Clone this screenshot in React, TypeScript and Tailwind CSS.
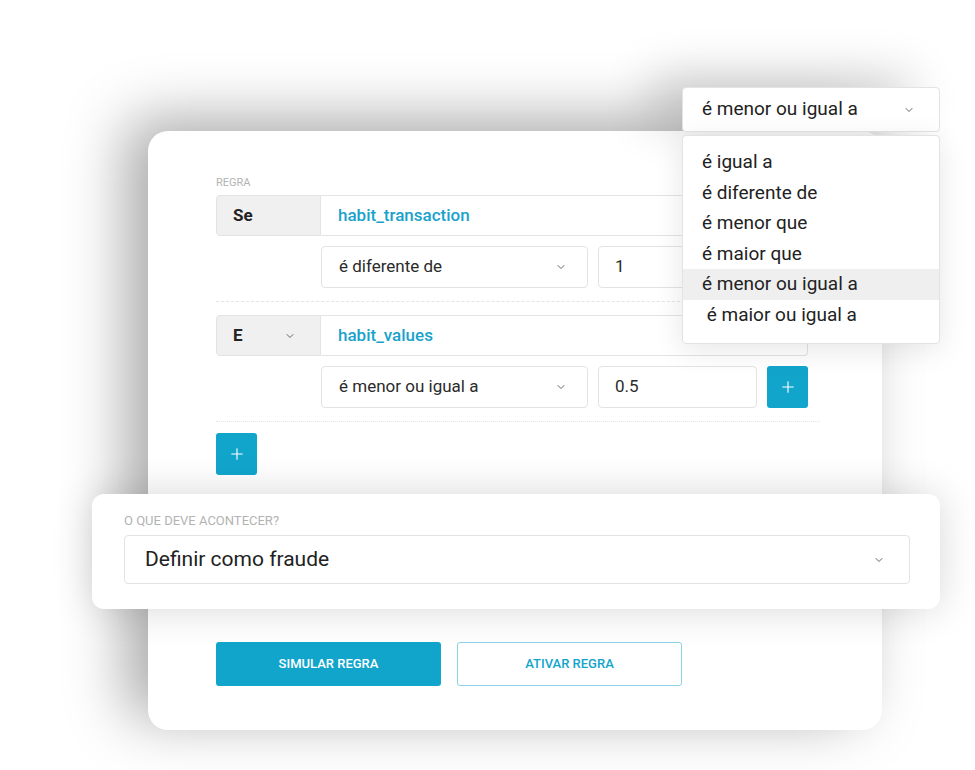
import React from "react"
import { ChevronDown, Plus } from "lucide-react"

const options = [
    "é igual a",
    "é diferente de",
    "é menor que",
    "é maior que",
    "é menor ou igual a",
    " é maior ou igual a",
]

const Chevron = () => (
    <ChevronDown size={12} strokeWidth={1.8} className="text-[#555]" />
)

const Select = ({ label }: { label: string }) => (
    <div className="w-[267px] h-full flex items-center justify-between pl-[17px] pr-[20px] bg-white border border-[#e3e3e3] rounded-[4px] text-[17px] text-[#2b2b2b]">
        <span>{label}</span>
        <Chevron />
    </div>
)

const ValueInput = ({ value }: { value: string }) => (
    <div className="w-[159px] h-full flex items-center pl-[16px] bg-white border border-[#e3e3e3] rounded-[4px] text-[17px] text-[#2b2b2b]">
        {value}
    </div>
)

const PlusButton = () => (
    <div className="w-[41px] h-[42px] flex items-center justify-center bg-[#12a5cc] rounded-[3px] text-white">
        <Plus size={18} strokeWidth={1.5} />
    </div>
)

const App = () => {
    return (
        <div className="relative w-[975px] h-[770px] overflow-hidden bg-white pt-[131px] pl-[148px] font-['Roboto',sans-serif]">
            <div className="relative w-[734px] rounded-[20px] bg-white pt-[46px] pb-[44px] pl-[68px] shadow-[-22px_-12px_60px_rgba(0,0,0,0.34)]">
                <p className="text-[11px] leading-none text-[#b3b3b3] mb-[7px]">REGRA</p>

                {/* first condition */}
                <div className="flex w-[592px] h-[41px]">
                    <div className="w-[105px] flex items-center pl-[16px] bg-[#f0f0f0] border border-[#e3e3e3] rounded-l-[4px] font-bold text-[17px] text-[#222]">
                        Se
                    </div>
                    <div className="flex-1 flex items-center pl-[17px] border border-l-0 border-[#e3e3e3] rounded-r-[4px] font-medium text-[17px] text-[#1aa2cb]">
                        habit_transaction
                    </div>
                </div>
                <div className="flex gap-[10px] h-[42px] mt-[10px] ml-[105px]">
                    <Select label="é diferente de" />
                    <ValueInput value="1" />
                </div>

                <div className="w-[604px] mt-[13px] mb-[13px] border-t border-dashed border-[#e4e4e4]" />

                {/* second condition */}
                <div className="flex w-[592px] h-[41px]">
                    <div className="w-[105px] flex items-center justify-between pl-[16px] pr-[24px] bg-[#f0f0f0] border border-[#e3e3e3] rounded-l-[4px] font-bold text-[17px] text-[#222]">
                        E
                        <Chevron />
                    </div>
                    <div className="flex-1 flex items-center pl-[17px] border border-l-0 border-[#e3e3e3] rounded-r-[4px] font-medium text-[17px] text-[#1aa2cb]">
                        habit_values
                    </div>
                </div>
                <div className="flex gap-[10px] h-[42px] mt-[10px] ml-[105px]">
                    <Select label="é menor ou igual a" />
                    <ValueInput value="0.5" />
                    <PlusButton />
                </div>

                <div className="w-[604px] mt-[13px] mb-[11px] border-t border-dotted border-[#e4e4e4]" />

                <PlusButton />

                {/* action card */}
                <div className="relative -ml-[124px] mt-[19px] w-[848px] rounded-[12px] bg-white pt-[20px] pb-[25px] pl-[32px] shadow-[0_0_40px_rgba(0,0,0,0.16)]">
                    <p className="text-[13px] leading-none text-[#b3b3b3] mb-[8px]">O QUE DEVE ACONTECER?</p>
                    <div className="w-[786px] h-[49px] flex items-center justify-between pl-[20px] pr-[24px] border border-[#e3e3e3] rounded-[4px] text-[21px] text-[#222]">
                        <span>Definir como fraude</span>
                        <Chevron />
                    </div>
                </div>

                <div className="flex gap-[16px] mt-[33px]">
                    <div className="w-[225px] h-[44px] flex items-center justify-center bg-[#12a5cc] rounded-[3px] text-[13px] font-medium text-white">
                        SIMULAR REGRA
                    </div>
                    <div className="w-[225px] h-[44px] flex items-center justify-center border border-[#8fd2e7] rounded-[3px] text-[13px] font-medium text-[#12a5cc]">
                        ATIVAR REGRA
                    </div>
                </div>

                {/* open dropdown */}
                <div className="absolute left-[534px] -top-[44px] w-[258px]">
                    <div className="h-[45px] flex items-center justify-between pl-[19px] pr-[24px] bg-white border border-[#e3e3e3] rounded-[4px] text-[19px] text-[#222] shadow-[-30px_-10px_50px_rgba(0,0,0,0.2)]">
                        <span>é menor ou igual a</span>
                        <Chevron />
                    </div>
                    <div className="mt-[3px] pt-[11px] pb-[12px] bg-white border border-[#e3e3e3] rounded-[4px] shadow-[0_6px_30px_rgba(0,0,0,0.1)]">
                        {options.map((o, i) => (
                            <div
                                key={o}
                                className={
                                    i === 4
                                        ? "h-[30.6px] flex items-center pl-[19px] bg-[#efefef] text-[19px] text-[#222] whitespace-pre"
                                        : "h-[30.6px] flex items-center pl-[19px] text-[19px] text-[#222] whitespace-pre"
                                }
                            >
                                {o}
                            </div>
                        ))}
                    </div>
                </div>
            </div>
        </div>
    )
}

export default App
